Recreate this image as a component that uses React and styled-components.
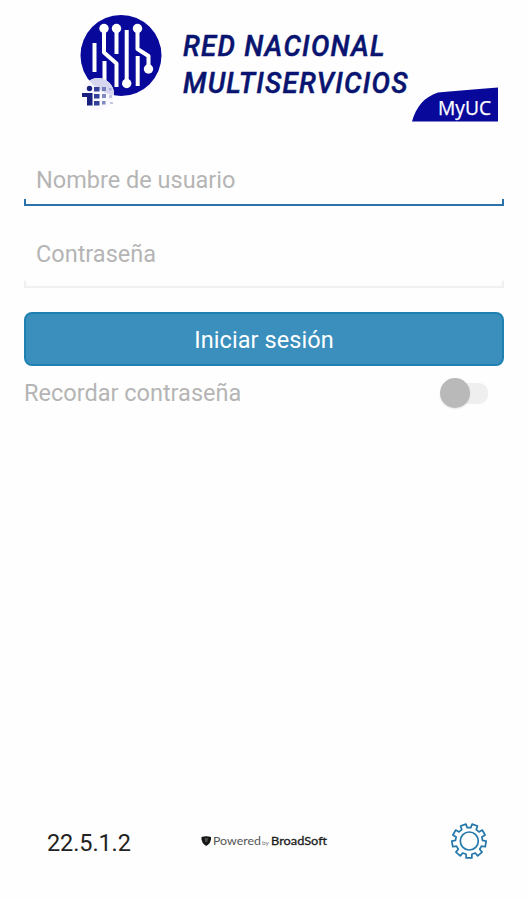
import {useState} from 'react'
import styled, {createGlobalStyle} from 'styled-components'

const GlobalStyle = createGlobalStyle`
    * {
        box-sizing: border-box;
    }

    body {
        margin: 0;
        background: #fefefe;
        font-family: Roboto, 'Liberation Sans', sans-serif;
    }
`

const Screen = styled.main`
    display: flex;
    flex-direction: column;
    width: 527px;
    height: 900px;
    background: #fefefe;
`

const Brand = styled.svg`
    display: block;
    width: 527px;
    height: 130px;
    flex: none;
`

const Form = styled.form`
    display: flex;
    flex-direction: column;
    padding: 30px 23px 0 24px;
`

const Field = styled.label`
    display: flex;
    flex-direction: column;
    margin-bottom: ${props => props.$active ? '28px' : '24px'};
`

const Input = styled.input`
    width: 100%;
    height: 39px;
    flex: none;
    padding: 0 12px;
    border: none;
    outline: none;
    background: none;
    color: #555;
    font: 400 23.5px Roboto, sans-serif;

    &::placeholder {
        color: #b5b5b5;
        opacity: 1;
    }
`

const Underline = styled.span`
    flex: none;
    height: 7px;
    margin-top: ${props => props.$active ? '0' : '8px'};
    border: solid ${props => props.$active ? '#2a72ac' : '#f0f0f0'};
    border-width: 0 2px 2px;
`

const Submit = styled.button`
    height: 54px;
    padding: 1px 0 0;
    border: 2px solid #1f80b2;
    border-radius: 8px;
    background: #3a8fbd;
    color: #fff;
    font: 400 23.5px Roboto, sans-serif;
    letter-spacing: .08px;
`

const Remember = styled.div`
    display: flex;
    align-items: center;
    justify-content: space-between;
    height: 54px;
    padding-right: 16px;
    color: #b5b5b5;
    font-size: 23.5px;
`

const Track = styled.button`
    display: flex;
    align-items: center;
    justify-content: ${props => props.$on ? 'flex-end' : 'flex-start'};
    width: 41px;
    height: 21px;
    padding: 0;
    border: none;
    background: #efefef;
    border-radius: 9px;
`

const Knob = styled.span`
    flex: none;
    width: 30px;
    height: 30px;
    margin: 0 -7px;
    border-radius: 50%;
    background: #b9b9b9;
    box-shadow: 0 1px 2px rgba(0, 0, 0, .1);
`

const Footer = styled.footer`
    display: grid;
    grid-template-columns: 153px 1fr 38px;
    align-items: center;
    height: 40px;
    margin-top: auto;
    margin-bottom: 39px;
    padding: 0 39px 0 47px;
`

const Version = styled.span`
    padding-top: 3px;
    color: #222;
    font-size: 23.5px;
    letter-spacing: -.1px;
`

const Powered = styled.svg`
    display: block;
    width: 130px;
    height: 16px;
`

const Settings = styled.svg`
    display: block;
    width: 38px;
    height: 38px;
`

// closed outline of a cog, centred on 19,19
function gearPath(teeth, outer, inner) {
    const step = Math.PI * 2 / teeth
    const points = []
    for (let i = 0; i < teeth; i++) {
        const a = i * step - Math.PI / 2 + .35
        const corners = [[-.31, inner], [-.24, outer], [.24, outer], [.31, inner]]
        corners.forEach(([offset, r]) => {
            const angle = a + offset * step
            points.push(`${(19 + Math.cos(angle) * r).toFixed(2)} ${(19 + Math.sin(angle) * r).toFixed(2)}`)
        })
    }
    return `M${points.join('L')}Z`
}

function BrandLogo() {
    return (
        <Brand viewBox='0 0 527 130'>
            <defs>
                <clipPath id='disc'><circle cx='121' cy='55.5' r='40.5' /></clipPath>
            </defs>
            <circle cx='121' cy='55.5' r='40.5' fill='#08089b' />
            <g fill='none' stroke='#fff' strokeWidth='4' strokeLinejoin='round'>
                <path d='M94.5 43V72M104 29V52.5L116.5 63.5V87M116.5 29V54M104.5 61V82M126.7 30V83M137.5 29V49L148.5 56V68M137.7 56V86' />
            </g>
            <g fill='#fff'>
                <circle cx='104' cy='28.5' r='4.7' />
                <circle cx='116.5' cy='28.5' r='4.7' />
                <circle cx='137.5' cy='28.5' r='4.7' />
                <circle cx='148.5' cy='69' r='4.7' />
                <circle cx='126.7' cy='83.5' r='4.7' />
            </g>
            <circle cx='98' cy='94' r='16' fill='#f8f8fe' />
            <circle cx='98' cy='94' r='16' fill='#d6d6f0' clipPath='url(#disc)' />
            <circle cx='89.5' cy='88.5' r='2.7' fill='#17207e' />
            <path d='M82 93H92.5V105.5H87V97H82Z' fill='#17207e' />
            <g fill='#34419a'>
                <path d='M94 87H99.5V91.5H94ZM94 94H99.5V98.5H94ZM94 101H99.5V105.5H94Z' />
                <path d='M102 87H106V91H102ZM102 94H106V98H102ZM102 101H105.5V104.5H102Z' opacity='.6' />
                <path d='M109 88H111.5V90.5H109ZM109 95H112V98H109ZM110 102H113V104H110Z' opacity='.28' />
            </g>
            <g fill='#08146f' stroke='#08146f' strokeWidth='.5' fontFamily='Roboto' fontStyle='italic' fontWeight='500' fontSize='30'>
                <text transform='translate(183 56) scale(.92 1)' textLength='219' lengthAdjust='spacing'>RED NACIONAL</text>
                <text transform='translate(183 92.5) scale(.92 1)' textLength='244' lengthAdjust='spacing'>MULTISERVICIOS</text>
            </g>
            <path d='M412 121.5C416 107 424 97 438 92.5Q466 90 498 87.5V121.5Z' fill='#08089b' />
            <text x='438' y='114.5' fill='#fff' stroke='#fff' strokeWidth='.25' fontFamily='Open Sans' fontSize='19.5' textLength='53' lengthAdjust='spacingAndGlyphs'>MyUC</text>
        </Brand>
    )
}

function App() {
    const [remember, setRemember] = useState(false)

    return (
        <Screen>
            <GlobalStyle />
            <BrandLogo />
            <Form onSubmit={e => e.preventDefault()}>
                <Field $active>
                    <Input placeholder='Nombre de usuario' />
                    <Underline $active />
                </Field>
                <Field>
                    <Input type='password' placeholder='Contraseña' />
                    <Underline />
                </Field>
                <Submit>Iniciar sesión</Submit>
                <Remember>
                    Recordar contraseña
                    <Track type='button' $on={remember} onClick={() => setRemember(!remember)}>
                        <Knob />
                    </Track>
                </Remember>
            </Form>
            <Footer>
                <Version>22.5.1.2</Version>
                <Powered viewBox='0 0 130 16'>
                    <path d='M1.5 4Q6 2.500 11 4V6.5Q10 11 6.2 13Q2.5 11 1.5 6.5Z' fill='#161616' />
                    <path d='M4.8 6H7.8M5 8H7.5' stroke='#999' strokeWidth='.8' />
                    <g fontFamily='Lato'>
                        <text x='13' y='12' fill='#555' fontSize='11.5' textLength='48' lengthAdjust='spacingAndGlyphs'>Powered</text>
                        <text x='62' y='12' fill='#777' fontSize='6.5' textLength='7' lengthAdjust='spacingAndGlyphs'>by</text>
                        <text x='71' y='12' fill='#1c1c1c' stroke='#1c1c1c' strokeWidth='.3' fontSize='11.5' textLength='56' lengthAdjust='spacingAndGlyphs'>BroadSoft</text>
                    </g>
                </Powered>
                <Settings viewBox='0 0 38 38' fill='none' stroke='#2377ab' strokeWidth='1.7' strokeLinejoin='round'>
                    <path d={gearPath(9, 17.2, 13.5)} />
                    <circle cx='19.3' cy='19' r='9' />
                </Settings>
            </Footer>
        </Screen>
    )
}

export default App
